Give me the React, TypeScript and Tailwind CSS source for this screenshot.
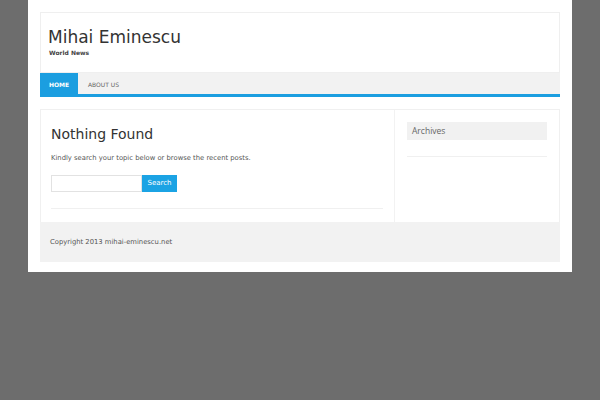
import React from 'react';

const font = { fontFamily: '"DejaVu Sans", Verdana, sans-serif' };

export default function App() {
  return (
    <div className="min-h-[400px] w-[600px] bg-[#6d6d6d]" style={font}>
      <div className="mx-auto w-[544px] bg-white px-3 pt-3 pb-[10px]">
        {/* Header */}
        <div className="h-[61px] border border-[#efefef] px-[7px] pt-[13px]">
          <div className="text-[17px] leading-[22px] text-[#333]">Mihai Eminescu</div>
          <div className="mt-[1px] pl-[1px] text-[6px] font-bold leading-[8px] text-[#444]">World News</div>
        </div>

        {/* Nav */}
        <div className="flex h-[24px] border-b-[3px] border-[#1b9ee0] bg-[#f2f2f2]">
          <div className="flex w-[38px] items-center justify-center bg-[#1b9ee0] pt-px text-[6px] font-bold text-white">HOME</div>
          <div className="flex items-center px-[10px] pt-px text-[6px] text-[#666]">ABOUT US</div>
        </div>

        {/* Content */}
        <div className="mt-3 flex h-[113px] border border-b-0 border-[#f0f0f0]">
          <div className="flex w-[353px] flex-col px-[10px] pt-[15px]">
            <h1 className="text-[14px] leading-[18px] text-[#333]">Nothing Found</h1>
            <p className="mt-[10px] text-[6.8px] leading-[10px] text-[#555]">
              Kindly search your topic below or browse the recent posts.
            </p>
            <div className="mt-[12px] flex">
              <div className="h-[17px] w-[91px] border border-[#e2e2e2] bg-white" />
              <button className="h-[17px] w-[35px] bg-[#1ba3e4] text-[7px] text-white">Search</button>
            </div>
            <div className="mt-[16px] h-px w-[332px] bg-[#f0f0f0]" />
          </div>
          <div className="flex-1 border-l border-[#f2f2f2] px-[12px] pt-[12px]">
            <div
              className="flex h-[18px] items-center bg-[#f1f1f1] px-[5px] text-[8.5px] text-[#666]"
              style={{ fontFamily: '"Open Sans", sans-serif' }}
            >
              Archives
            </div>
            <div className="mt-[16px] h-px bg-[#f0f0f0]" />
          </div>
        </div>

        {/* Footer */}
        <div className="flex h-[40px] items-center bg-[#f2f2f2] px-[10px] text-[6.8px] text-[#555]">
          Copyright 2013 mihai-eminescu.net
        </div>
      </div>
    </div>
  );
}
